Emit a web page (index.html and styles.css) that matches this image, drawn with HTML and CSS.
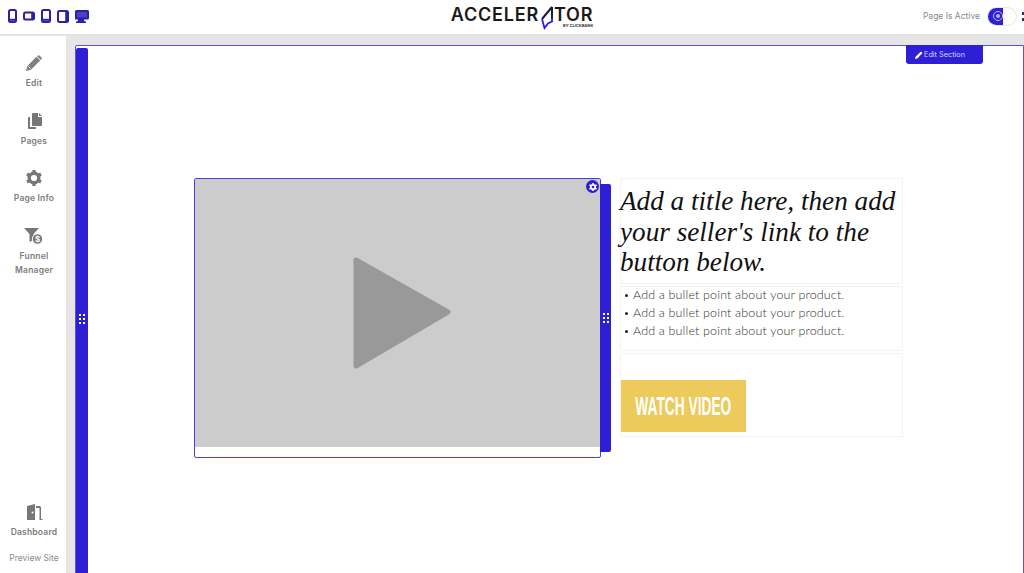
FILE: index.html
```html
<!DOCTYPE html>
<html lang="en">
<head>
  <meta charset="UTF-8">
  <meta name="viewport" content="width=device-width, initial-scale=1">
  <title>Accelerator Page Editor</title>
  <link rel="stylesheet" href="styles.css">
</head>
<body>
  <header class="topbar">
    <div class="devices">
      <svg width="9" height="14" viewBox="0 0 9 14"><rect x="1" y="1" width="7" height="12" rx="1.500" class="dev-line"/><path d="M1 10.800h7" class="dev-line"/></svg>
      <svg width="12" height="10" viewBox="0 0 12 10"><rect x="1" y="1.500" width="10" height="7" rx="1.500" class="dev-line"/><path d="M9.200 1.500v7" class="dev-line"/></svg>
      <svg width="10" height="14" viewBox="0 0 10 14"><rect x="1" y="1" width="8" height="12" rx="1.500" class="dev-line"/><path d="M1 10.800h8" class="dev-line"/></svg>
      <svg width="12" height="13" viewBox="0 0 12 13"><rect x="1" y="1" width="10" height="11" rx="1.500" class="dev-line"/><path d="M9.200 1v11" class="dev-line"/></svg>
      <svg width="14" height="13" viewBox="0 0 14 13"><path d="M1.500 0h11A1.500 1.500 0 0 1 14 1.500v6.500a1.500 1.500 0 0 1-1.500 1.500h-3.500l.5 2h1.500v1.500h-10v-1.500h1.500l.5-2h-3.500A1.500 1.500 0 0 1 0 8V1.500A1.500 1.500 0 0 1 1.500 0z" fill="#2c1fa8"/><rect x="2" y="2" width="10" height="5.500" fill="#4a40c0"/></svg>
    </div>
    <div class="logo">
      <span class="logo-word">ACCELER</span>
      <svg class="logo-arrow" width="13" height="24" viewBox="0 0 13 24"><path d="M12 1L2 13M12 1v12" fill="none" stroke="#1a1a3a" stroke-width="2"/><path d="M2 13l2.500 9 3.500-4.500 4-2V12" fill="none" stroke="#2c1fd6" stroke-width="1.800"/></svg>
      <span class="logo-end">
        <span class="logo-word">TOR</span>
        <span class="logo-by">BY CLICKBANK</span>
      </span>
    </div>
    <div class="status">
      <span class="status-label">Page Is Active</span>
      <span class="toggle">
        <span class="toggle-on">
          <svg width="12" height="12" viewBox="0 0 12 12"><circle cx="7" cy="6" r="4.500" fill="none" stroke="#b9b5f5" stroke-width="1"/><circle cx="7" cy="6" r="2" fill="#b9b5f5"/></svg>
        </span>
      </span>
      <span class="status-more"><i></i><i></i></span>
    </div>
  </header>

  <div class="workspace">
    <nav class="sidebar">
      <a class="nav-item">
        <svg width="18" height="18" viewBox="0 0 18 18"><path d="M1 17l1.300-5L11.500 2.800l3.700 3.700L6 15.700z" fill="#808080"/><path d="M3.200 12.200l2.600 2.600" stroke="#fff" stroke-width=".8"/><path d="M12.600 1.700a1.500 1.500 0 0 1 2.100 0l1.600 1.600a1.500 1.500 0 0 1 0 2.100l-.5.500-3.700-3.700z" fill="#808080"/></svg>
        <span>Edit</span>
      </a>
      <a class="nav-item">
        <svg width="18" height="18" viewBox="0 0 18 18"><path d="M8 1h5v4h4v8a1 1 0 0 1-1 1H8a1 1 0 0 1-1-1V2a1 1 0 0 1 1-1z" fill="#777"/><path d="M14 1l3 3h-3z" fill="#777"/><path d="M5 5v10h6v2H4a1 1 0 0 1-1-1V6a1 1 0 0 1 1-1z" fill="#777"/></svg>
        <span>Pages</span>
      </a>
      <a class="nav-item">
        <svg width="18" height="18" viewBox="0 0 18 18"><circle cx="9" cy="9" r="4.800" fill="none" stroke="#777" stroke-width="3.400"/><path d="M9 1v3M9 14v3M2 5l2.600 1.500M13.400 11.500L16 13M2 13l2.600-1.500M13.400 6.500L16 5" stroke="#777" stroke-width="3.200"/></svg>
        <span>Page Info</span>
      </a>
      <a class="nav-item">
        <svg width="20" height="18" viewBox="0 0 20 18"><path d="M0 1h15l-5.500 6v6l-4 2V7z" fill="#777"/><circle cx="13.500" cy="12" r="5.200" fill="#777" stroke="#fff"/><text x="13.500" y="15" class="funnel-sign">$</text></svg>
        <span>Funnel<br>Manager</span>
      </a>
      <div class="nav-bottom">
        <a class="nav-item">
          <svg width="18" height="18" viewBox="0 0 18 18"><path d="M2 3l8-2v16H2z" fill="#777"/><path d="M11 3h3.500a1.500 1.500 0 0 1 1.500 1.500V16h1.500v1h-3V5h-3.500z" fill="#777"/><circle cx="7.500" cy="9.500" r="1" fill="#fff"/></svg>
          <span>Dashboard</span>
        </a>
        <a class="preview-link">Preview Site</a>
      </div>
    </nav>

    <main class="stage">
      <section class="page-section">
        <div class="section-handle">
          <span class="grip"><i></i><i></i><i></i><i></i><i></i><i></i></span>
        </div>
        <a class="edit-section">
          <svg width="8" height="8" viewBox="0 0 8 8"><path d="M0 8l.6-2.300L5.400.9a.8.8 0 0 1 1.100 0l.6.600a.8.8 0 0 1 0 1.100L2.300 7.400z" fill="#fff"/></svg>
          Edit Section
        </a>

        <div class="row">
          <div class="video-col">
            <div class="video-box">
              <div class="video-thumb">
                <svg class="play-icon" width="100" height="114" viewBox="0 0 100 114"><path d="M4 4L96 56 4 110z" fill="#999" stroke="#999" stroke-width="5" stroke-linejoin="round"/></svg>
              </div>
              <span class="gear-badge">
                <svg width="8" height="8" viewBox="0 0 18 18"><circle cx="9" cy="9" r="5" fill="none" stroke="#fff" stroke-width="4"/><path d="M9 0v4M9 14v4M1 4.500l3.500 2M13.500 11.500l3.500 2M1 13.500l3.500-2M13.500 6.500l3.500-2" stroke="#fff" stroke-width="3.500"/></svg>
              </span>
            </div>
            <div class="col-handle">
              <span class="grip"><i></i><i></i><i></i><i></i><i></i><i></i></span>
            </div>
          </div>

          <div class="text-col">
            <div class="block title-block">
              <h1>Add a title here, then add<br>your seller's link to the<br>button below.</h1>
            </div>
            <div class="block list-block">
              <ul>
                <li>Add a bullet point about your product.</li>
                <li>Add a bullet point about your product.</li>
                <li>Add a bullet point about your product.</li>
              </ul>
            </div>
            <div class="block button-block">
              <a class="watch-btn"><span class="watch-label">WATCH VIDEO</span></a>
            </div>
          </div>
        </div>
      </section>
    </main>
  </div>
</body>
</html>
```

FILE: styles.css
```css
/* Basic Reset */
* {
  margin: 0;
  padding: 0;
  box-sizing: border-box;
}

html {
  overflow: hidden;
}

body {
  font-family: 'Inter', 'Liberation Sans', sans-serif;
  width: 1024px;
  height: 573px;
  overflow: hidden;
  display: flex;
  flex-direction: column;
  background: #fff;
}

/* Top bar */
.topbar {
  height: 36px;
  flex: none;
  display: grid;
  grid-template-columns: 1fr auto 1fr;
  align-items: center;
  padding: 0 0 2px 8px;
  background: #fff;
  border-bottom: 2px solid #e2e2e2;
}

.devices {
  display: flex;
  align-items: center;
  gap: 6px;
}

.dev-line {
  fill: none;
  stroke: #2c1fa8;
  stroke-width: 2;
}

.logo {
  display: flex;
  align-items: flex-start;
  height: 28px;
  padding-top: 3px;
  margin-left: 12px;
}

.logo-word {
  font-family: 'Inter', 'Liberation Sans', sans-serif;
  font-size: 18px;
  line-height: 20px;
  font-weight: 600;
  letter-spacing: 0.8px;
  color: #1a1a1a;
}

.logo-arrow {
  margin: 1px 1px 0 1px;
}

.logo-end {
  display: flex;
  flex-direction: column;
  align-items: flex-end;
}

.logo-by {
  font-size: 4px;
  line-height: 4px;
  font-weight: 700;
  color: #333;
  margin-top: -1px;
}

.status {
  display: flex;
  justify-content: flex-end;
  align-items: center;
  gap: 7px;
}

.status-label {
  font-size: 8.500px;
  color: #888;
}

.toggle {
  display: block;
  width: 30px;
  height: 19px;
  border: 1px solid #e6e6e6;
  border-radius: 10px;
  background: #fff;
  overflow: hidden;
}

.toggle-on {
  display: flex;
  align-items: center;
  justify-content: flex-end;
  width: 15px;
  height: 100%;
  background: #2c1fd6;
  overflow: hidden;
}

.status-more {
  width: 2px;
  margin-left: -2px;
  display: flex;
  flex-direction: column;
  gap: 3px;
}

.status-more i {
  display: block;
  height: 3px;
  background: #2c2c6a;
}

/* Main area */
.workspace {
  flex: 1;
  display: flex;
  min-height: 0;
  overflow: hidden;
}

.sidebar {
  width: 66px;
  flex: none;
  display: flex;
  flex-direction: column;
  align-items: center;
  gap: 21.700px;
  padding: 18px 0 8px 2px;
  background: #fff;
}

.nav-item {
  width: 100%;
  display: flex;
  flex-direction: column;
  align-items: center;
  gap: 4px;
  font-size: 8.500px;
  font-weight: 600;
  letter-spacing: 0.2px;
  line-height: 14px;
  text-align: center;
  color: #7c7c7c;
}

.funnel-sign {
  font-size: 8px;
  font-weight: 700;
  text-anchor: middle;
  letter-spacing: 0;
  fill: #fff;
}

.nav-bottom {
  margin-top: auto;
  width: 100%;
  display: flex;
  flex-direction: column;
  align-items: center;
  gap: 12px;
}

.preview-link {
  font-size: 8.500px;
  line-height: 14px;
  color: #8c8c8c;
}

.stage {
  flex: 1;
  background: #e6e6e6;
  padding: 9px 0 0 9px;
  min-width: 0;
}

.page-section {
  position: relative;
  height: 700px;
  padding: 132px 0 0 118px;
  background: #fff;
  border: 1px solid #5a50dc;
  border-radius: 2px 0 0 0;
}

.section-handle {
  position: absolute;
  top: 2px;
  left: 0;
  bottom: 0;
  width: 12px;
  display: flex;
  justify-content: center;
  padding-top: 266px;
  background: #2c1fd6;
  border-radius: 2px 2px 0 0;
}

.grip {
  display: grid;
  grid-template-columns: 2px 2px;
  grid-auto-rows: 2px;
  gap: 2px;
  height: 10px;
}

.grip i {
  background: #fff;
}

.edit-section {
  position: absolute;
  top: -1px;
  right: 40px;
  width: 77px;
  height: 19px;
  display: flex;
  align-items: center;
  padding-left: 9px;
  gap: 1px;
  font-size: 7.300px;
  color: #d8d6fa;
  background: #2c1fd6;
  border-radius: 0 0 3px 3px;
}

.row {
  display: flex;
  align-items: flex-start;
}

.video-col {
  position: relative;
  width: 426px;
  flex: none;
}

.video-box {
  position: relative;
  width: 407px;
  height: 280px;
  border: 1px solid #4a3fdc;
  border-radius: 2px;
  background: #fff;
}

.video-thumb {
  height: 268px;
  display: flex;
  align-items: center;
  justify-content: center;
  background: #cccccc;
}

.play-icon {
  margin-left: 9px;
}

.gear-badge {
  position: absolute;
  top: 1px;
  right: 1px;
  width: 13px;
  height: 13px;
  display: flex;
  align-items: center;
  justify-content: center;
  border-radius: 50%;
  background: #2c1fd6;
}

.col-handle {
  position: absolute;
  top: 6px;
  left: 406px;
  width: 11px;
  height: 268px;
  display: flex;
  justify-content: center;
  align-items: center;
  background: #2c1fd6;
  border-radius: 0 2px 2px 0;
}

.text-col {
  width: 283px;
  display: flex;
  flex-direction: column;
  gap: 2px;
}

.block {
  border: 1px solid #f3f3f3;
}

.title-block {
  height: 106px;
  padding-top: 7px;
}

h1 {
  font-family: 'Liberation Serif', serif;
  font-style: italic;
  font-weight: 400;
  font-size: 27.200px;
  line-height: 30.500px;
  white-space: nowrap;
  margin-left: -1px;
  color: #111;
}

.list-block {
  height: 65px;
  padding-left: 4px;
}

ul {
  list-style: none;
  margin-top: -1px;
}

li {
  font-family: 'Lato', sans-serif;
  font-size: 12.500px;
  font-weight: 300;
  letter-spacing: 0.15px;
  line-height: 18px;
  color: #333;
  padding-left: 8px;
  position: relative;
}

li:before {
  content: '';
  position: absolute;
  left: 0;
  top: 8px;
  width: 3px;
  height: 3px;
  border-radius: 50%;
  background: #222;
}

.button-block {
  height: 84px;
  padding-top: 26px;
}

.watch-btn {
  display: flex;
  align-items: center;
  justify-content: center;
  width: 125px;
  height: 52px;
  padding-top: 1px;
  overflow: hidden;
  background: #ecca5c;
}

.watch-label {
  display: inline-block;
  flex: none;
  white-space: nowrap;
  font-family: 'Liberation Sans', sans-serif;
  font-size: 25px;
  font-weight: 700;
  color: #fff;
  transform: scaleX(0.55);
}
```
